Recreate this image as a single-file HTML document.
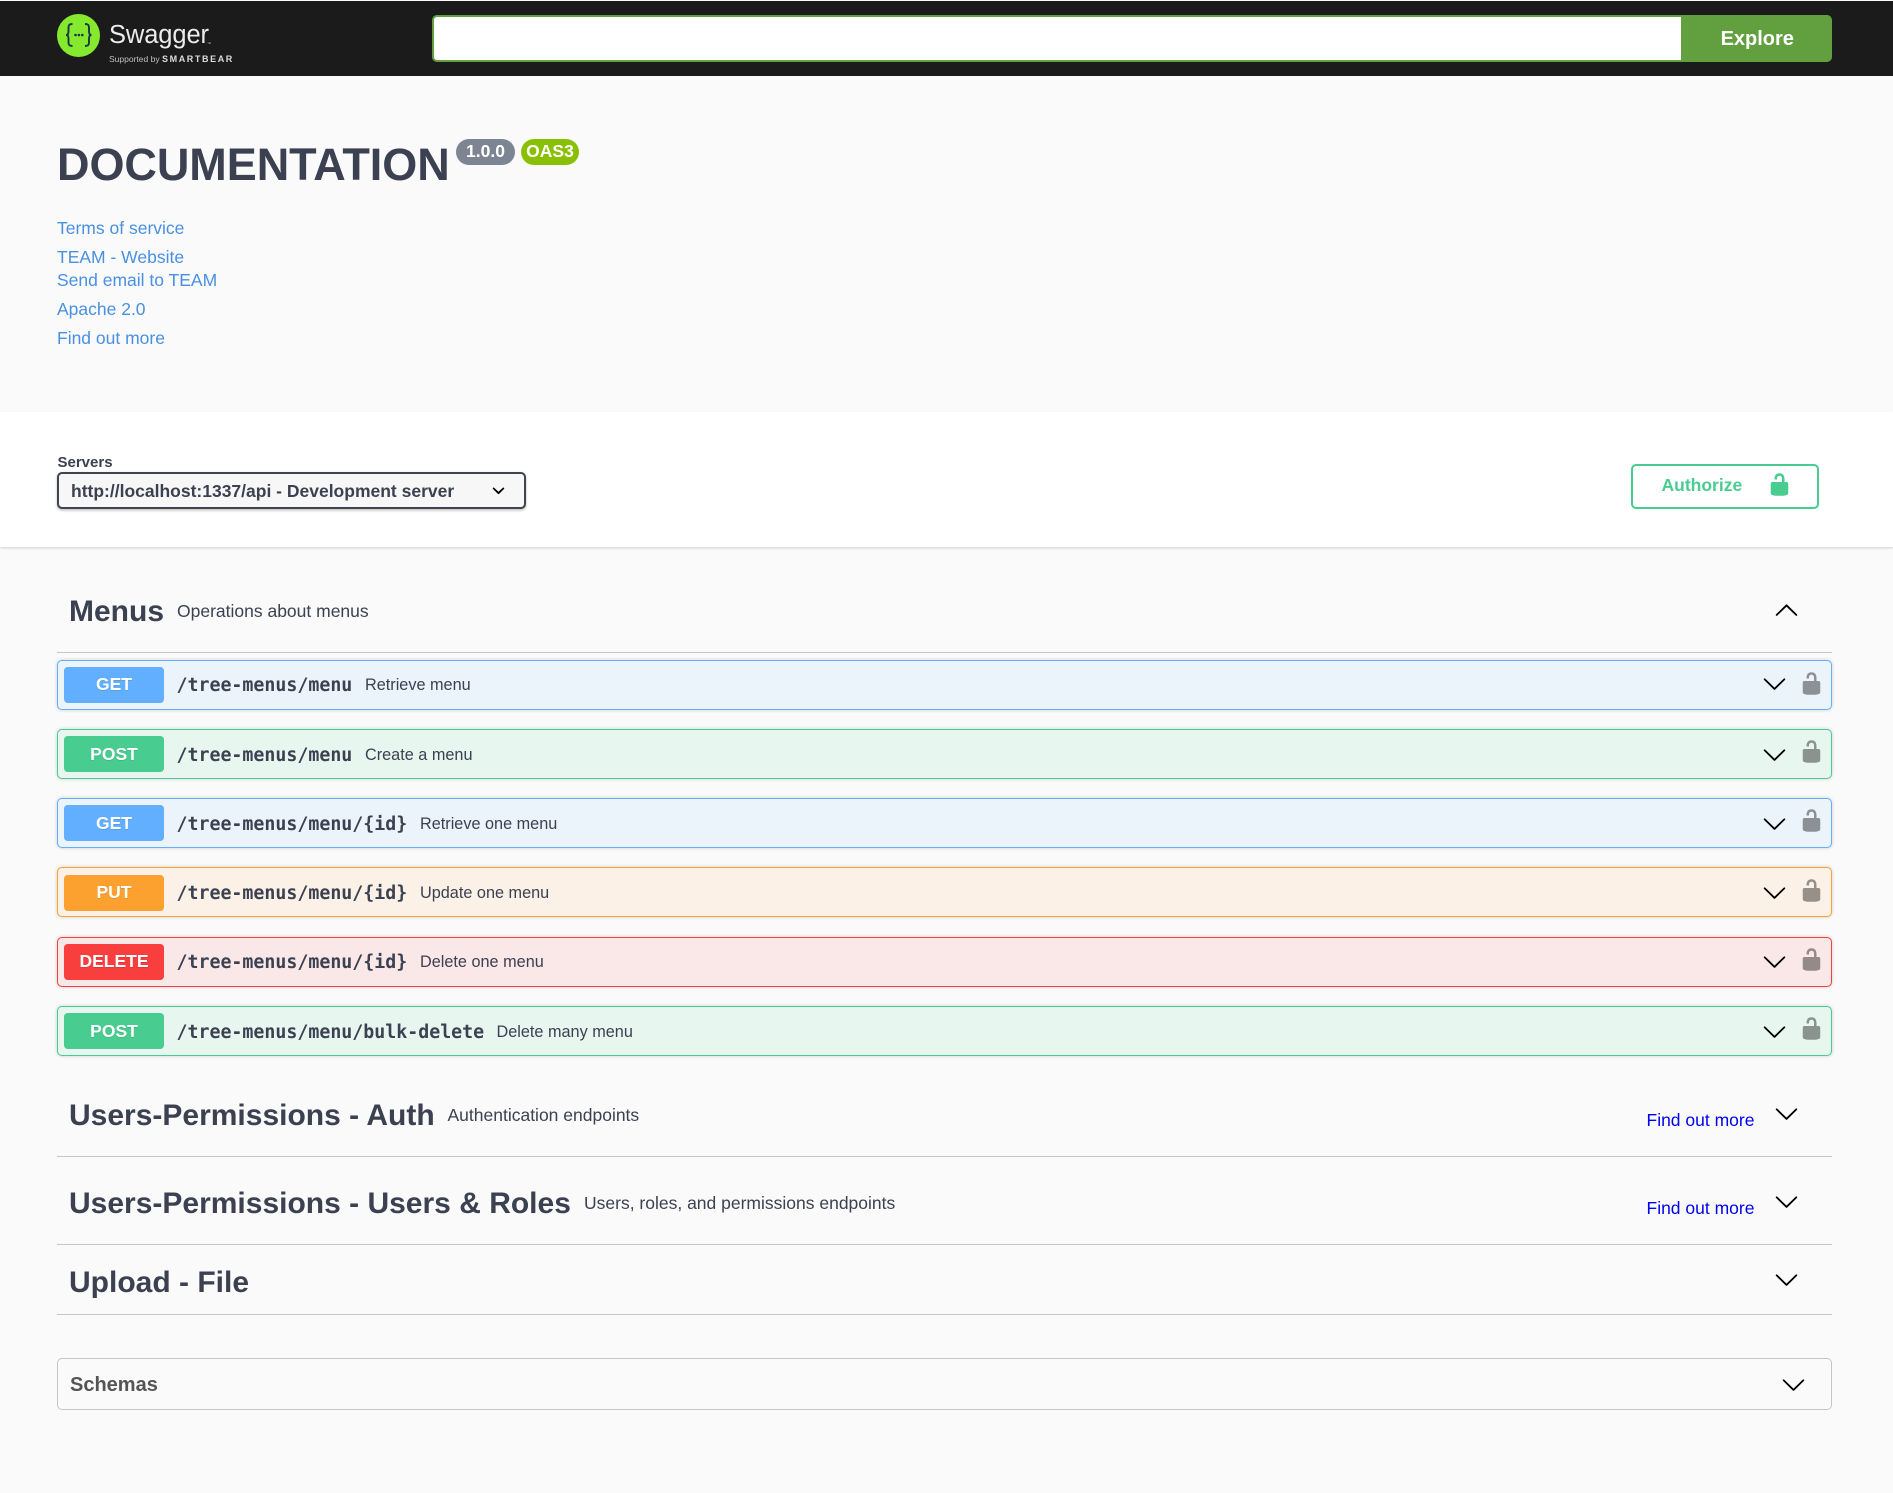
<!DOCTYPE html>
<html lang="en">
<head>
<meta charset="utf-8">
<title>Swagger UI</title>
<style>
html,body{margin:0;padding:0;background:#fafafa}
body{position:relative;width:1893px;height:1493px;overflow:hidden;font-family:"Liberation Sans",Arial,sans-serif;color:#3b4151}
svg{display:block}
a{text-decoration:none}
.abs,.t{position:absolute}
.t{white-space:nowrap}
.link{font-size:17.5px;line-height:20px;color:#4990e2;left:57px}
.bar{position:absolute;left:0;width:1893px}
.badge{position:absolute;top:139px;height:26px;line-height:24px;border-radius:14px;color:#fff;font-weight:700;font-size:17.5px;text-align:center}
.tag{font-size:30px;line-height:36px;font-weight:700;left:69px}
.tagd{font-size:17.5px;line-height:20px}
.line{position:absolute;left:57px;width:1775px;height:1.25px;background:#c4c5c9}
.more{font-size:17.5px;line-height:20px;color:#0000ee;left:1646.5px}
.ch{position:absolute;width:25px;height:25px}
.row{position:absolute;left:57px;width:1775px;height:50px}
.row .bd{position:absolute;inset:0;box-sizing:border-box;border-width:1.25px;border-style:solid;border-radius:5px;box-shadow:0 0 3.5px rgba(0,0,0,.19)}
.m{position:absolute;left:7px;top:var(--mt);width:100px;height:36px;border-radius:3.75px;color:#fff;font-weight:700;font-size:17.5px;line-height:20px;text-align:center;padding-top:var(--pd);box-sizing:border-box;text-shadow:0 1px 0 rgba(0,0,0,.1)}
.p{position:absolute;left:119.5px;top:var(--pt);font-family:"DejaVu Sans Mono","Liberation Mono",monospace;font-weight:700;font-size:18.25px;line-height:24px;white-space:nowrap;color:#3b4151}
.d{position:absolute;top:var(--dt);font-size:16.25px;line-height:20px;white-space:nowrap;color:#3b4151}
.get .bd{border-color:#61affe;background:#ebf3fb}.get .m{background:#61affe}
.post .bd{border-color:#49cc90;background:#e8f6f0}.post .m{background:#49cc90}
.put .bd{border-color:#fca130;background:#fbf1e6}.put .m{background:#fca130}
.del .bd{border-color:#f93e3e;background:#fae7e7}.del .m{background:#f93e3e}
.row .a{position:absolute;left:1704.7px;top:var(--a);width:25px;height:25px}
.row .l{position:absolute;left:1741.5px;top:var(--l);width:25px;height:25px;fill:#000;opacity:.4}
</style>
</head>
<body>
<svg width="0" height="0" style="position:absolute">
  <symbol id="down" viewBox="0 0 20 20"><path d="M17.418 6.109c.272-.268.709-.268.979 0s.271.701 0 .969l-7.908 7.83c-.27.268-.707.268-.979 0l-7.908-7.83c-.27-.268-.27-.701 0-.969.271-.268.709-.268.979 0L10 13.25l7.418-7.141z"/></symbol>
  <symbol id="up" viewBox="0 0 20 20"><path d="M17.418 14.908c.272.268.709.268.979 0s.271-.701 0-.969l-7.908-7.83c-.27-.268-.707-.268-.979 0l-7.908 7.83c-.27.268-.27.701 0 .969.271.268.709.268.979 0L10 7.773l7.418 7.135z"/></symbol>
  <symbol id="lock" viewBox="0 0 20 20"><path d="M15.8 8H14V5.6C14 2.703 12.665 1 10 1 7.334 1 6 2.703 6 5.6V6h2v-.801C8 3.754 8.797 3 10 3c1.203 0 2 .754 2 2.199V8H4c-.553 0-1 .646-1 1.199V17c0 .549.428 1.139.951 1.307l1.197.387C5.672 18.861 6.55 19 7.1 19h5.8c.549 0 1.428-.139 1.951-.307l1.196-.387c.524-.167.953-.757.953-1.306V9.199C17 8.646 16.352 8 15.8 8z"/></symbol>
</svg>

<!-- Top bar -->
<div class="bar" style="top:0;height:1px;background:#fafafa"></div>
<div class="bar" style="top:1px;height:75px;background:#1b1b1b"></div>
<svg class="abs" style="left:57px;top:14px" width="44" height="44" viewBox="0 0 44 44">
  <circle cx="21.5" cy="21.5" r="21.5" fill="#85ea2d"/>
  <path d="M15.5 10c-3 0-4 1-4 3.5v4c0 2-.8 3.5-2.5 3.5 1.7 0 2.5 1.5 2.5 3.5v4c0 2.5 1 3.5 4 3.5" fill="none" stroke="#173647" stroke-width="1.9"/>
  <path d="M28 10c3 0 4 1 4 3.5v4c0 2 .8 3.5 2.5 3.5-1.7 0-2.5 1.5-2.5 3.5v4c0 2.5-1 3.5-4 3.5" fill="none" stroke="#173647" stroke-width="1.9"/>
  <circle cx="18.5" cy="21" r="1.3" fill="#173647"/><circle cx="21.9" cy="21" r="1.3" fill="#173647"/><circle cx="25.3" cy="21" r="1.3" fill="#173647"/>
</svg>
<div class="t" style="left:109px;top:17px;font-size:25.5px;line-height:36px;color:#ececec;letter-spacing:-.1px;font-weight:400">Swagger</div>
<div class="t" style="left:207px;top:41px;font-size:4px;line-height:6px;color:#ccc">™</div>
<div class="t" style="left:109px;top:54px;font-size:8.5px;line-height:11px;color:#c0c0c0">Supported by</div>
<div class="t" style="left:162px;top:53px;font-size:9px;line-height:12px;color:#dcdcdc;font-weight:700;letter-spacing:1.6px">SMARTBEAR</div>

<div class="abs" style="left:432px;top:15px;width:1250px;height:47px;box-sizing:border-box;background:#fff;border:2.5px solid #62a03f;border-right:0;border-radius:5px 0 0 5px"></div>
<div class="abs" style="left:1681px;top:15px;width:151px;height:47px;padding-left:1.5px;box-sizing:border-box;background:#62a03f;border-radius:0 5px 5px 0;color:#fff;font-weight:700;font-size:20px;line-height:48px;text-align:center">Explore</div>

<!-- Info -->
<div class="t" style="left:57px;top:137.9px;font-size:45px;line-height:54px;font-weight:700;color:#3b4151;letter-spacing:-.05px">DOCUMENTATION</div>
<div class="badge" style="left:456px;width:59px;background:#7d8492">1.0.0</div>
<div class="badge" style="left:521px;width:58px;background:#89bf04">OAS3</div>

<a class="t link" style="top:218px">Terms of service</a>
<a class="t link" style="top:247px">TEAM - Website</a>
<a class="t link" style="top:270px">Send email to TEAM</a>
<a class="t link" style="top:299px">Apache 2.0</a>
<a class="t link" style="top:328px">Find out more</a>

<!-- Scheme container -->
<div class="bar" style="top:412px;height:134.5px;background:#fff;box-shadow:0 1.25px 2.5px 0 rgba(0,0,0,.15)"></div>
<div class="t" style="left:57.5px;top:453.8px;font-size:15px;line-height:18px;font-weight:700">Servers</div>
<div class="abs" style="left:57px;top:472px;width:469px;height:37px;box-sizing:border-box;background:#f7f7f7;border:2.5px solid #41444e;border-radius:5px;box-shadow:0 1.25px 2.5px rgba(0,0,0,.25)"></div>
<div class="t" style="left:71px;top:481px;font-size:17.5px;line-height:20px;font-weight:700">http://localhost:1337/api - Development server</div>
<svg class="abs" style="left:485.5px;top:478px" width="25" height="25" viewBox="0 0 20 20"><path d="M13.418 7.859a.695.695 0 0 1 .978 0 .68.68 0 0 1 0 .969l-3.908 3.83a.697.697 0 0 1-.979 0l-3.908-3.83a.68.68 0 0 1 0-.969.695.695 0 0 1 .978 0L10 11l3.418-3.141z"/></svg>

<div class="abs" style="left:1631px;top:464px;width:188px;height:45px;box-sizing:border-box;background:#fff;border:2.5px solid #49cc90;border-radius:5px"></div>
<div class="t" style="left:1661.5px;top:475px;font-size:17.5px;line-height:20px;font-weight:700;color:#49cc90">Authorize</div>
<svg class="abs" style="left:1767.25px;top:471.75px;fill:#49cc90" width="25" height="25"><use href="#lock"/></svg>

<!-- Menus -->
<div class="t tag" style="top:593.5px;left:69px">Menus</div>
<div class="t tagd" style="left:177px;top:601px">Operations about menus</div>
<svg class="ch" style="left:1774px;top:596.5px"><use href="#up"/></svg>
<div class="line" style="top:652px"></div>

<div class="row get" style="top:660px;--mt:7px;--pd:7px;--a:11px;--l:10.5px;--pt:14.2px;--dt:15.4px"><div class="bd"></div><div class="m">GET</div><div class="p">/tree-menus/menu</div><div class="d" style="left:308px">Retrieve menu</div><svg class="a"><use href="#down"/></svg><svg class="l"><use href="#lock"/></svg></div>

<div class="row post" style="top:729.3px;--mt:6.7px;--pd:8px;--a:12.7px;--l:10.2px;--pt:14.7px;--dt:15.4px"><div class="bd"></div><div class="m">POST</div><div class="p">/tree-menus/menu</div><div class="d" style="left:308px">Create a menu</div><svg class="a"><use href="#down"/></svg><svg class="l"><use href="#lock"/></svg></div>

<div class="row get" style="top:798.3px;--mt:6.7px;--pd:8px;--a:12.7px;--l:9.8px;--pt:14.7px;--dt:15.4px"><div class="bd"></div><div class="m">GET</div><div class="p">/tree-menus/menu/{id}</div><div class="d" style="left:363px">Retrieve one menu</div><svg class="a"><use href="#down"/></svg><svg class="l"><use href="#lock"/></svg></div>

<div class="row put" style="top:867.3px;--mt:7.7px;--pd:7px;--a:12.3px;--l:10.7px;--pt:15.2px;--dt:15.4px"><div class="bd"></div><div class="m">PUT</div><div class="p">/tree-menus/menu/{id}</div><div class="d" style="left:363px">Update one menu</div><svg class="a"><use href="#down"/></svg><svg class="l"><use href="#lock"/></svg></div>

<div class="row del" style="top:937px;--mt:7px;--pd:7px;--a:11.6px;--l:10px;--pt:14.2px;--dt:15.4px"><div class="bd"></div><div class="m">DELETE</div><div class="p">/tree-menus/menu/{id}</div><div class="d" style="left:363px">Delete one menu</div><svg class="a"><use href="#down"/></svg><svg class="l"><use href="#lock"/></svg></div>

<div class="row post" style="top:1006px;--mt:7px;--pd:8px;--a:12.7px;--l:10px;--pt:15.2px;--dt:16.4px"><div class="bd"></div><div class="m">POST</div><div class="p">/tree-menus/menu/bulk-delete</div><div class="d" style="left:439.5px">Delete many menu</div><svg class="a"><use href="#down"/></svg><svg class="l"><use href="#lock"/></svg></div>

<!-- Other tags -->
<div class="t tag" style="top:1097.6px">Users-Permissions - Auth</div>
<div class="t tagd" style="left:447.5px;top:1105px">Authentication endpoints</div>
<a class="t more" style="top:1109.7px">Find out more</a>
<svg class="ch" style="left:1774px;top:1100.8px"><use href="#down"/></svg>
<div class="line" style="top:1156px"></div>

<div class="t tag" style="top:1185.6px">Users-Permissions - Users &amp; Roles</div>
<div class="t tagd" style="left:584px;top:1193px">Users, roles, and permissions endpoints</div>
<a class="t more" style="top:1197.7px">Find out more</a>
<svg class="ch" style="left:1774px;top:1188.6px"><use href="#down"/></svg>
<div class="line" style="top:1244px"></div>

<div class="t tag" style="top:1264.6px">Upload - File</div>
<svg class="ch" style="left:1774px;top:1266.6px"><use href="#down"/></svg>
<div class="line" style="top:1314px"></div>

<!-- Schemas -->
<div class="abs" style="left:57px;top:1358.3px;width:1775px;height:52px;box-sizing:border-box;border:1.25px solid #c4c5c9;border-radius:5px"></div>
<div class="t" style="left:70px;top:1373px;font-size:20px;line-height:24px;font-weight:700;color:#555">Schemas</div>
<svg class="ch" style="left:1780.7px;top:1371.6px"><use href="#down"/></svg>
</body>
</html>
